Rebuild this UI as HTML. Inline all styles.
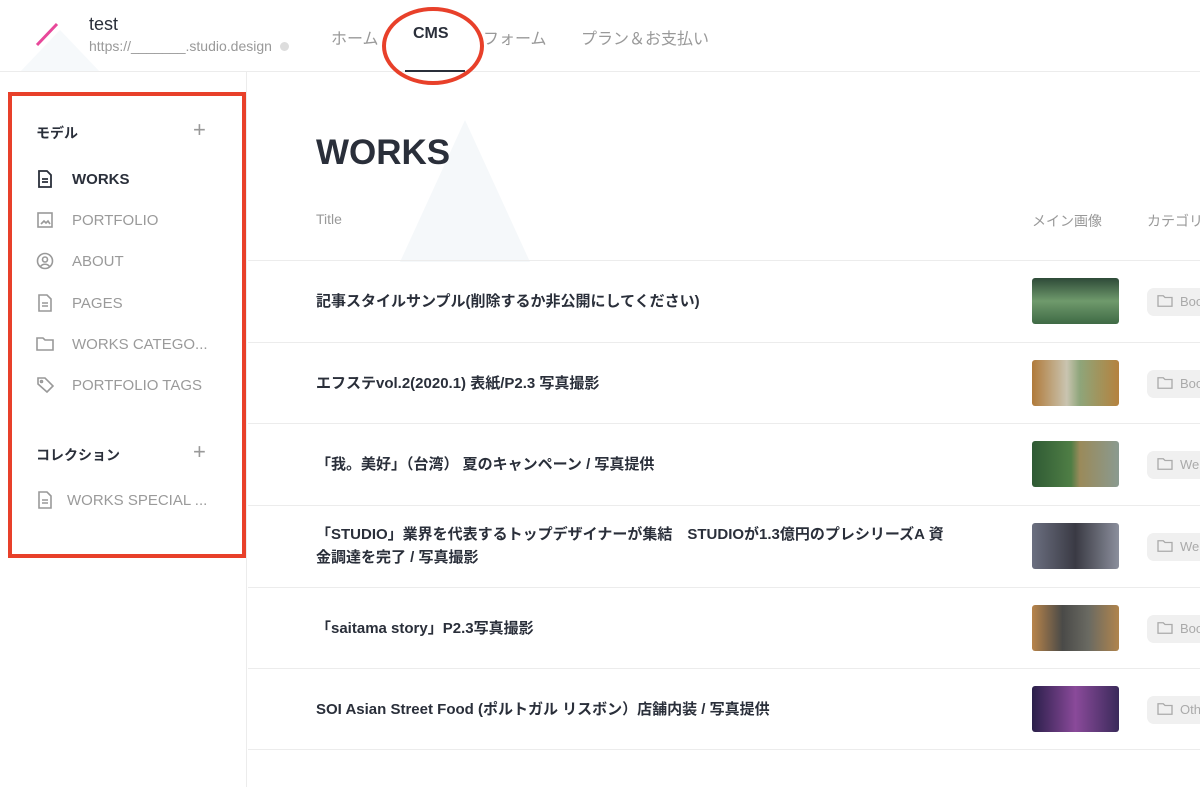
<!DOCTYPE html>
<html><head><meta charset="utf-8"><style>
*{box-sizing:border-box;margin:0;padding:0}
body{width:1200px;height:787px;overflow:hidden;background:#fff;font-family:"Liberation Sans","Noto Sans CJK JP",sans-serif;position:relative;color:#2a2f3a}
.abs{position:absolute}
.hdr{left:0;top:0;width:1200px;height:72px;border-bottom:1px solid #ececec}
.nav{top:25px;font-size:16px;color:#999}
.side{left:0;top:72px;width:247px;height:715px;border-right:1px solid #ececec}
.sec{font-size:14px;font-weight:bold;color:#2a2f3a}
.plus{font-size:22px;color:#999;font-weight:300}
.item{left:36px;font-size:15px;color:#9a9a9a;display:flex;align-items:center}
.item svg{margin-right:18px}
.row{left:248px;width:952px;height:82px;border-top:1px solid #ececec}
.rt{position:absolute;left:68px;font-size:15px;font-weight:bold;color:#2a2f3a;line-height:23px;width:700px}
.th{position:absolute;left:784px;top:17px;width:87px;height:46px;border-radius:3px}
.chip{position:absolute;left:899px;top:27px;width:70px;height:28px;border-radius:7px;background:#f0f0f0;font-size:13px;color:#aaa;padding:6px 0 0 10px;display:flex;gap:7px;align-items:flex-start}
</style></head><body>
<svg class="abs" style="left:0;top:0" width="1200" height="787">
<polygon points="60,30 20,72 100,72" fill="#f6f9fb"/>
<polygon points="465,120 400,262 530,262" fill="#f5f8fa"/>
<line x1="37" y1="45" x2="57" y2="24" stroke="#e8489a" stroke-width="3"/>
<defs><symbol id="fd" viewBox="0 0 18 16"><path d="M1 2h6l2 2h8v10H1z" fill="none" stroke="#aaa" stroke-width="1.5"/></symbol></defs>
</svg>
<div class="abs hdr"></div>
<div class="abs" style="left:89px;top:14px;font-size:18px;color:#2a2f3a">test</div>
<div class="abs" style="left:89px;top:38px;font-size:14px;color:#999">https://_______.studio.design <span style="display:inline-block;width:9px;height:9px;border-radius:50%;background:#ddd;margin-left:4px"></span></div>
<div class="abs nav" style="left:331px">ホーム</div>
<div class="abs nav" style="left:413px;color:#2a2f3a;font-weight:bold">CMS</div>
<div class="abs" style="left:405px;top:70px;width:60px;height:2px;background:#2a2f3a"></div>
<div class="abs nav" style="left:483px">フォーム</div>
<div class="abs nav" style="left:581px">プラン＆お支払い</div>
<div class="abs" style="left:382px;top:7px;width:102px;height:78px;border:4px solid #e8402a;border-radius:50%"></div>

<div class="abs side"></div>
<div class="abs" style="left:8px;top:92px;width:238px;height:466px;border:4px solid #e8402a"></div>
<div class="abs sec" style="left:36px;top:123px">モデル</div>
<div class="abs plus" style="left:193px;top:117px">+</div>
<div class="abs item" style="top:169px;color:#2a2f3a;font-weight:bold"><svg width="18" height="20" viewBox="0 0 18 20" fill="none" stroke="#2a2f3a" stroke-width="1.8"><path d="M3 2h8l4 4v12H3z M6 10h6M6 13h6"/></svg>WORKS</div>
<div class="abs item" style="top:210px"><svg width="18" height="20" viewBox="0 0 18 20" fill="none" stroke="#999" stroke-width="1.6"><rect x="2" y="3" width="14" height="14"/><path d="M5 14l3-3 2 2 2-2 2 3"/></svg>PORTFOLIO</div>
<div class="abs item" style="top:251px"><svg width="18" height="20" viewBox="0 0 18 20" fill="none" stroke="#999" stroke-width="1.6"><circle cx="9" cy="10" r="7.5"/><circle cx="9" cy="8.5" r="2.5"/><path d="M4.5 15.5c2-3 7-3 9 0"/></svg>ABOUT</div>
<div class="abs item" style="top:293px"><svg width="18" height="20" viewBox="0 0 18 20" fill="none" stroke="#999" stroke-width="1.6"><path d="M3 2h8l4 4v12H3z M6 10h6M6 13h6"/></svg>PAGES</div>
<div class="abs item" style="top:334px"><svg width="18" height="20" viewBox="0 0 18 20" fill="none" stroke="#999" stroke-width="1.6"><path d="M1 4h6l2 2h8v10H1z"/></svg>WORKS CATEGO...</div>
<div class="abs item" style="top:375px"><svg width="18" height="20" viewBox="0 0 18 20" fill="none" stroke="#999" stroke-width="1.6"><path d="M2 3h7l8 8-6 6-9-8z"/><circle cx="5.5" cy="6.5" r="1"/></svg>PORTFOLIO TAGS</div>
<div class="abs sec" style="left:36px;top:445px">コレクション</div>
<div class="abs plus" style="left:193px;top:439px">+</div>
<div class="abs item" style="top:490px;left:36px"><svg width="18" height="20" viewBox="0 0 18 20" fill="none" stroke="#999" stroke-width="1.6" style="margin-right:13px"><path d="M3 2h8l4 4v12H3z M6 10h6M6 13h6"/></svg>WORKS SPECIAL ...</div>

<div class="abs" style="left:316px;top:133px;font-size:35px;font-weight:bold;color:#2a2f3a">WORKS</div>
<div class="abs" style="left:316px;top:211px;font-size:14px;color:#999">Title</div>
<div class="abs" style="left:1032px;top:211px;font-size:14px;color:#999">メイン画像</div>
<div class="abs" style="left:1147px;top:211px;font-size:14px;color:#999;white-space:nowrap">カテゴリ</div>

<div class="abs row" style="top:260px"><div class="rt" style="top:29px">記事スタイルサンプル(削除するか非公開にしてください)</div><div class="th" style="background:linear-gradient(#2e4a38,#6f9a6c 50%,#3f6a45)"></div><div class="chip"><svg width="16" height="14"><use href="#fd"/></svg>Boo</div></div>
<div class="abs row" style="top:342px"><div class="rt" style="top:29px">エフステvol.2(2020.1) 表紙/P2.3 写真撮影</div><div class="th" style="background:linear-gradient(90deg,#b07a3a,#c9c4b0 40%,#8ea57a 55%,#b5823e)"></div><div class="chip"><svg width="16" height="14"><use href="#fd"/></svg>Boo</div></div>
<div class="abs row" style="top:423px"><div class="rt" style="top:29px">「我。美好」（台湾） 夏のキャンペーン / 写真提供</div><div class="th" style="background:linear-gradient(90deg,#2f5a34,#4f7e45 45%,#9a8a5a 55%,#8a9a90)"></div><div class="chip"><svg width="16" height="14"><use href="#fd"/></svg>We</div></div>
<div class="abs row" style="top:505px"><div class="rt" style="top:17px">「STUDIO」業界を代表するトップデザイナーが集結　STUDIOが1.3億円のプレシリーズA 資<br>金調達を完了 / 写真撮影</div><div class="th" style="background:linear-gradient(90deg,#6b6f80,#3a3a44 50%,#8b8f9c)"></div><div class="chip"><svg width="16" height="14"><use href="#fd"/></svg>We</div></div>
<div class="abs row" style="top:587px"><div class="rt" style="top:29px">「saitama story」P2.3写真撮影</div><div class="th" style="background:linear-gradient(90deg,#b8844a,#4a4a48 35%,#6a6a62 65%,#b0844c)"></div><div class="chip"><svg width="16" height="14"><use href="#fd"/></svg>Boo</div></div>
<div class="abs row" style="top:668px;border-bottom:1px solid #ececec"><div class="rt" style="top:29px">SOI Asian Street Food (ポルトガル リスボン）店舗内装 / 写真提供</div><div class="th" style="background:linear-gradient(90deg,#2a1f4a,#8a4a9a 50%,#3a2a5a)"></div><div class="chip"><svg width="16" height="14"><use href="#fd"/></svg>Oth</div></div>
</body></html>
